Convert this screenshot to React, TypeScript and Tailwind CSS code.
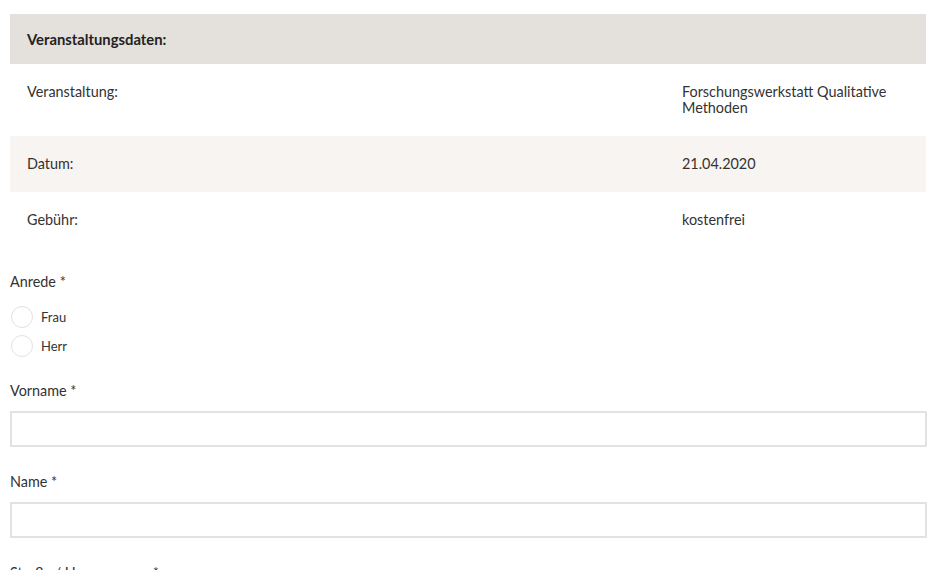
import React from 'react';

// Event data table rows
const ROWS = [
  { label: 'Veranstaltung:', value: 'Forschungswerkstatt Qualitative Methoden', bg: 'bg-white' },
  { label: 'Datum:', value: '21.04.2020', bg: 'bg-[#f7f4f1]' },
  { label: 'Gebühr:', value: 'kostenfrei', bg: 'bg-white' },
];

function Radio({ label }: { label: string }) {
  return (
    <label className="flex h-[29px] items-center gap-[8px]">
      <span className="ml-[1px] h-[22px] w-[22px] rounded-full border border-[#e2e2e2] bg-white" />
      <span>{label}</span>
    </label>
  );
}

function TextField({ label }: { label: string }) {
  return (
    <div>
      <div className="mb-[11px] leading-[18px]">{label}</div>
      <input
        type="text"
        className="block h-[36px] w-full border-2 border-[#e2e2e2] bg-white px-3 outline-none"
      />
    </div>
  );
}

export default function App() {
  return (
    <div
      className="min-h-screen bg-white px-[10px] pt-[14px] text-[14.4px] leading-4 text-[#333]"
      style={{ fontFamily: 'Lato, "Noto Sans", sans-serif' }}
    >
      <div className="w-[916px]">
        {/* ---- Veranstaltungsdaten ---- */}
        <div className="bg-[#e4e0dc] px-[17px] py-[17px] text-[14.8px] font-bold text-[#222]">
          Veranstaltungsdaten:
        </div>
        {ROWS.map((row) => (
          <div key={row.label} className={`flex ${row.bg} py-5 pl-[17px]`}>
            <div className="w-[655px] shrink-0">{row.label}</div>
            <div className="w-[225px]">{row.value}</div>
          </div>
        ))}
      </div>

      {/* ---- Form ---- */}
      <div className="mt-[25px] w-[917px]">
        <div className="mb-[11px] leading-[18px]">Anrede *</div>
        <div className="text-[13px]">
          <Radio label="Frau" />
          <Radio label="Herr" />
        </div>
        <div className="mt-[22px] space-y-[26px]">
          <TextField label="Vorname *" />
          <TextField label="Name *" />
          <TextField label="Straße / Hausnummer *" />
        </div>
      </div>
    </div>
  );
}
